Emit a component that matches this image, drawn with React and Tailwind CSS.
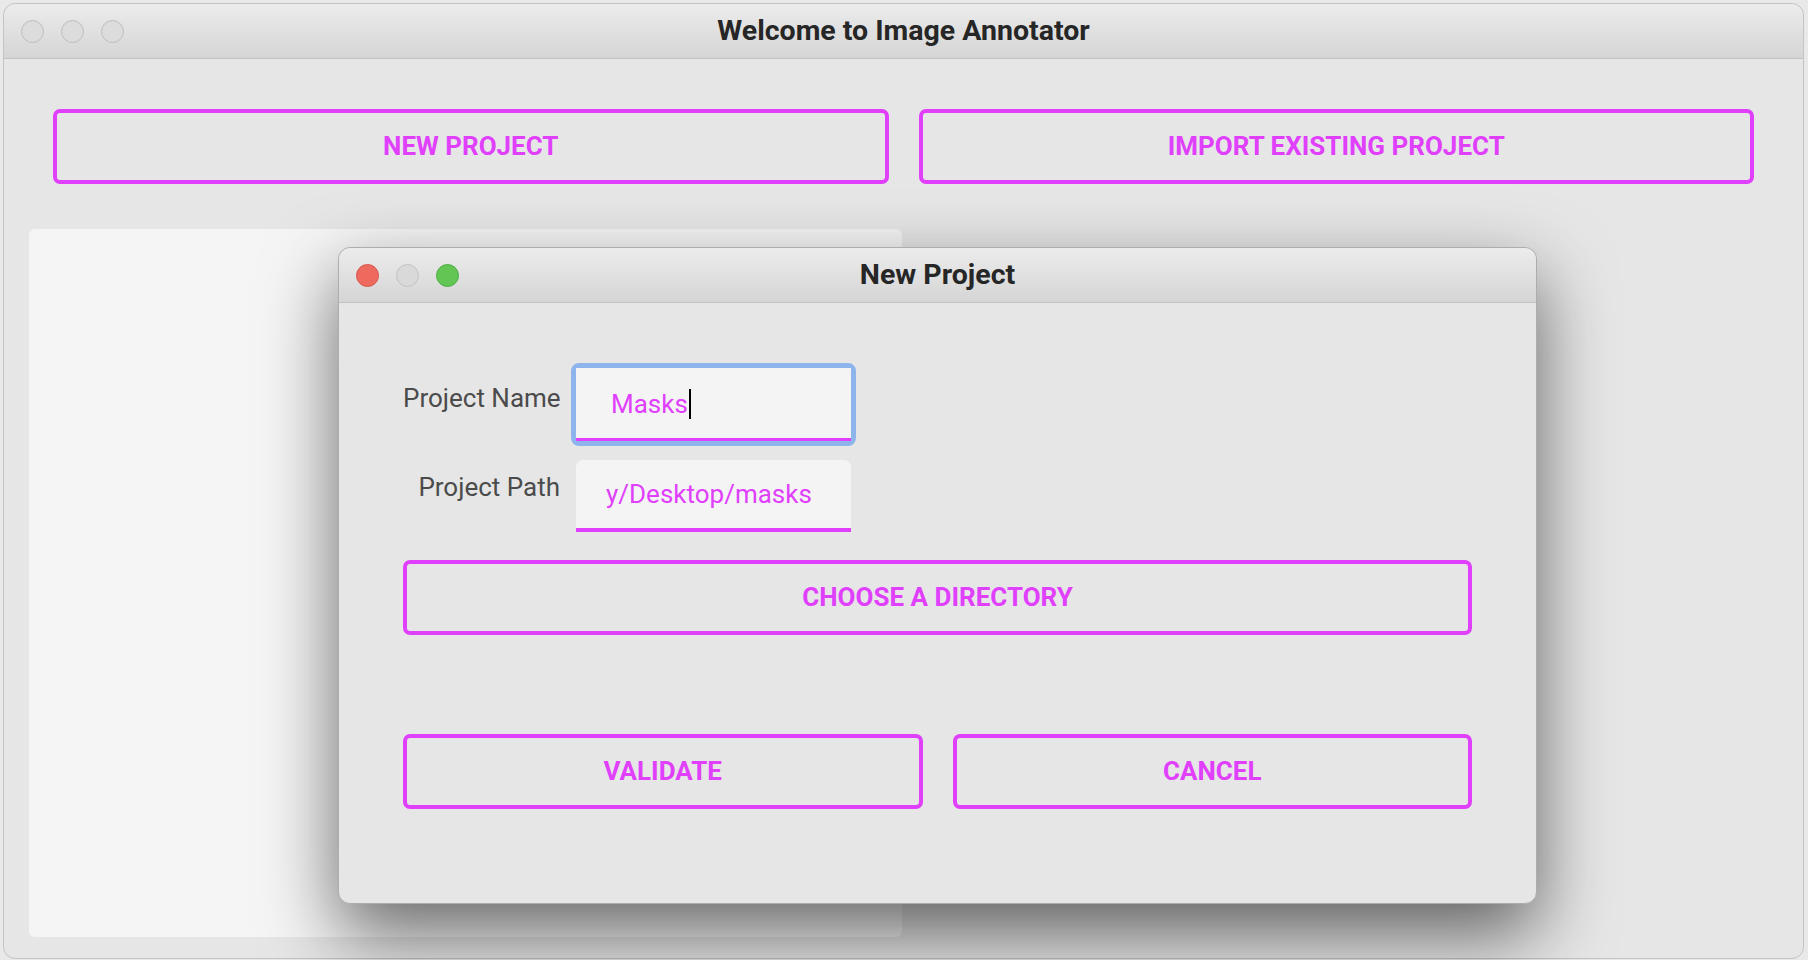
const MAGENTA = 'text-[#e040fb]'

function Lights({ colored }) {
  const cls = colored
    ? ['bg-[#ee6a5e] border-[#d5554a]', 'bg-[#d9d9d9] border-[#c2c2c2]', 'bg-[#62c554] border-[#4fae43]']
    : ['bg-[#dcdcdc] border-[#bdbdbd]', 'bg-[#dcdcdc] border-[#bdbdbd]', 'bg-[#dcdcdc] border-[#bdbdbd]']
  return (
    <div className="flex items-center gap-[17px] pl-[17px]">
      {cls.map((c, i) => (
        <span key={i} className={`block w-[23px] h-[23px] rounded-full border ${c}`} />
      ))}
    </div>
  )
}

function TitleBar({ title, colored }) {
  return (
    <div className="grid grid-cols-[1fr_auto_1fr] items-center h-[55px] border-b border-[#c2c2c2] bg-gradient-to-b from-[#ececec] to-[#d5d5d5] rounded-t-[12px]">
      <Lights colored={colored} />
      <div className="text-[28.5px] font-bold text-[#262626] leading-none">{title}</div>
      <div />
    </div>
  )
}

function OutlineButton({ children, className = '' }) {
  return (
    <button
      type="button"
      className={`h-[75px] border-4 border-[#e040fb] rounded-[7px] text-[26px] font-bold ${MAGENTA} flex items-center justify-center ${className}`}
    >
      {children}
    </button>
  )
}

export default function App() {
  return (
    <div className="w-[1808px] h-[960px] bg-[#e9e9e9] relative overflow-hidden font-['Roboto','Liberation_Sans',sans-serif]">
      {/* Main window */}
      <div className="ml-[3px] mt-[3px] w-[1801px] h-[956px] rounded-[12px] bg-[#e6e6e6] border border-[#c4c4c4] overflow-hidden">
        <TitleBar title="Welcome to Image Annotator" />
        <div className="px-[49px] pt-[50px]">
          <div className="grid grid-cols-2 gap-[30px]">
            <OutlineButton>NEW PROJECT</OutlineButton>
            <OutlineButton>IMPORT EXISTING PROJECT</OutlineButton>
          </div>
        </div>
        <div className="ml-[25px] mt-[45px] w-[873px] h-[708px] bg-[#f5f5f5] rounded-[6px]" />
      </div>

      {/* New Project dialog */}
      <div className="absolute left-[338px] top-[247px] w-[1199px] h-[657px] rounded-[12px] bg-[#e6e6e6] border border-[#adadad] shadow-[0_30px_75px_rgba(0,0,0,0.58)]">
        <TitleBar title="New Project" colored />
        <div className="px-[64px] pt-[60px]">
          <div className="flex items-center">
            <label className="w-[157px] shrink-0 whitespace-nowrap text-right text-[26px] text-[#4b4b4b] mb-[13px]">Project Name</label>
            <div className="ml-[11px] w-[285px] border-[5px] border-[#8db4eb] rounded-[8px]">
              <div className="h-[73px] bg-[#f4f4f4] border-b-[3px] border-[#e040fb] flex items-center pl-[35px] pt-[2px]">
                <span className={`text-[26px] ${MAGENTA}`}>Masks</span>
                <span className="ml-[1px] w-[2px] h-[30px] bg-black" />
              </div>
            </div>
          </div>
          <div className="flex items-center mt-[9px]">
            <label className="w-[157px] shrink-0 whitespace-nowrap text-right text-[26px] text-[#4b4b4b] mb-[17px]">Project Path</label>
            <div className="ml-[11px] w-[285px] border-[5px] border-transparent">
              <div className="h-[72px] bg-[#f4f4f4] rounded-t-[7px] border-b-[4px] border-[#e040fb] flex items-center pl-[30px] overflow-hidden">
                <span className={`text-[26px] ${MAGENTA} whitespace-nowrap`}>y/Desktop/masks</span>
              </div>
            </div>
          </div>
          <OutlineButton className="w-full mt-[23px]">CHOOSE A DIRECTORY</OutlineButton>
          <div className="grid grid-cols-2 gap-[30px] mt-[99px]">
            <OutlineButton>VALIDATE</OutlineButton>
            <OutlineButton>CANCEL</OutlineButton>
          </div>
        </div>
      </div>
    </div>
  )
}
